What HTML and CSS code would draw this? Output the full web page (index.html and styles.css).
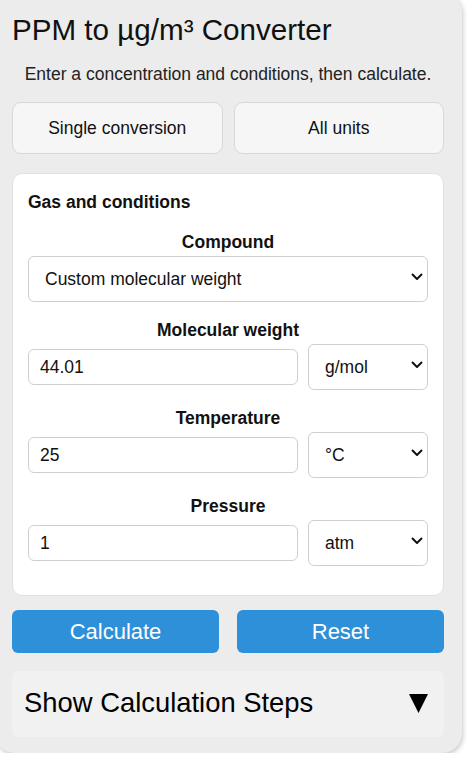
FILE: index.html
```html
<!DOCTYPE html>
<html lang="en">
<head>
<meta charset="utf-8">
<title>PPM to µg/m³ Converter</title>
<link rel="stylesheet" href="styles.css">
</head>
<body>
<div class="app">
  <h1 class="title">PPM to µg/m³ Converter</h1>
  <p class="subtitle">Enter a concentration and conditions, then calculate.</p>

  <div class="tabs">
    <button class="tab" type="button">Single conversion</button>
    <button class="tab" type="button">All units</button>
  </div>

  <section class="card">
    <h2 class="card-title">Gas and conditions</h2>

    <div class="field">
      <label class="field-label" for="compound">Compound</label>
      <div class="select-wrap">
        <select id="compound" class="select">
          <option>Custom molecular weight</option>
        </select>
        <svg class="chev" viewBox="0 0 12 7" width="12" height="7"><path d="M1 1 L6 6 L11 1" fill="none" stroke="#111" stroke-width="2"/></svg>
      </div>
    </div>

    <div class="field">
      <label class="field-label" for="mw">Molecular weight</label>
      <div class="row">
        <input id="mw" class="input" type="text" value="44.01">
        <div class="select-wrap unit">
          <select class="select"><option>g/mol</option></select>
          <svg class="chev" viewBox="0 0 12 7" width="12" height="7"><path d="M1 1 L6 6 L11 1" fill="none" stroke="#111" stroke-width="2"/></svg>
        </div>
      </div>
    </div>

    <div class="field">
      <label class="field-label" for="temp">Temperature</label>
      <div class="row">
        <input id="temp" class="input" type="text" value="25">
        <div class="select-wrap unit">
          <select class="select"><option>°C</option></select>
          <svg class="chev" viewBox="0 0 12 7" width="12" height="7"><path d="M1 1 L6 6 L11 1" fill="none" stroke="#111" stroke-width="2"/></svg>
        </div>
      </div>
    </div>

    <div class="field">
      <label class="field-label" for="pres">Pressure</label>
      <div class="row">
        <input id="pres" class="input" type="text" value="1">
        <div class="select-wrap unit">
          <select class="select"><option>atm</option></select>
          <svg class="chev" viewBox="0 0 12 7" width="12" height="7"><path d="M1 1 L6 6 L11 1" fill="none" stroke="#111" stroke-width="2"/></svg>
        </div>
      </div>
    </div>
  </section>

  <div class="actions">
    <button class="btn" type="button">Calculate</button>
    <button class="btn" type="button">Reset</button>
  </div>

  <details class="steps">
    <summary class="steps-summary">
      <span>Show Calculation Steps</span>
      <svg class="tri" viewBox="0 0 19 19" width="19" height="19"><polygon points="0,0 19,0 9.5,19" fill="#000"/></svg>
    </summary>
  </details>
</div>
</body>
</html>
```

FILE: styles.css
```css
* { box-sizing: border-box; }

html, body {
  margin: 0;
  padding: 0;
  background: #ffffff;
  overflow: hidden;
}

body {
  font-family: "Liberation Sans", Arial, sans-serif;
  font-size: 17.5px;
  line-height: 20px;
  color: #111;
}

.app {
  width: 467px;
  margin: -8px 0 0 -5px;
  padding: 21px 18px 16px 17px;
  background: #ebeceb;
  border-radius: 20px;
  box-shadow: 1px 2px 5px rgba(0, 0, 0, 0.22);
}

.title {
  margin: 0;
  font-size: 29.6px;
  line-height: 34px;
  font-weight: normal;
  color: #111;
}

.subtitle {
  margin: 17px 0 0;
  text-align: center;
  color: #222;
}

.tabs {
  display: flex;
  gap: 11px;
  margin-top: 18px;
}

.tab {
  flex: 1;
  height: 52px;
  font-family: inherit;
  font-size: 17.5px;
  color: #111;
  background: #f6f6f6;
  border: 1px solid #d8d8d8;
  border-radius: 9px;
  padding: 0;
}

.card {
  margin-top: 19px;
  background: #fff;
  border: 1px solid #e0e0e0;
  border-radius: 10px;
  padding: 18px 15px 11px 15px;
}

.card-title {
  margin: 0 0 20px;
  font-size: 17.5px;
  line-height: 20px;
  font-weight: bold;
}

.field {
  margin-bottom: 18px;
}

.field-label {
  display: block;
  text-align: center;
  font-weight: bold;
  margin-bottom: 4px;
}

.row {
  display: flex;
  align-items: center;
  gap: 10px;
}

.input {
  flex: 1;
  min-width: 0;
  height: 36px;
  padding: 0 11px;
  font-family: inherit;
  font-size: 17.5px;
  color: #111;
  border: 1px solid #cfcfcf;
  border-radius: 6px;
  background: #fff;
}

.select-wrap {
  position: relative;
}

.select-wrap.unit {
  width: 120px;
  flex: none;
}

.select {
  display: block;
  width: 100%;
  height: 46px;
  padding: 0 24px 0 16px;
  font-family: inherit;
  font-size: 17.5px;
  color: #111;
  background: #fff;
  border: 1px solid #cfcfcf;
  border-radius: 6px;
  appearance: none;
  -webkit-appearance: none;
}

.chev {
  position: absolute;
  right: 5px;
  top: 17px;
  pointer-events: none;
}

.actions {
  display: flex;
  gap: 18px;
  margin-top: 14px;
}

.btn {
  flex: 1;
  height: 43px;
  padding: 0;
  font-family: inherit;
  font-size: 22px;
  color: #fff;
  background: #2e90d8;
  border: none;
  border-radius: 6px;
}

.steps {
  margin-top: 18px;
  background: #f1f1f1;
  border-radius: 7px;
}

.steps-summary {
  list-style: none;
  display: flex;
  align-items: center;
  justify-content: space-between;
  padding: 16px 16px 18px 12px;
  font-size: 27.4px;
  line-height: 32px;
  color: #000;
}

.steps-summary::-webkit-details-marker { display: none; }

.tri {
  display: block;
}
```
